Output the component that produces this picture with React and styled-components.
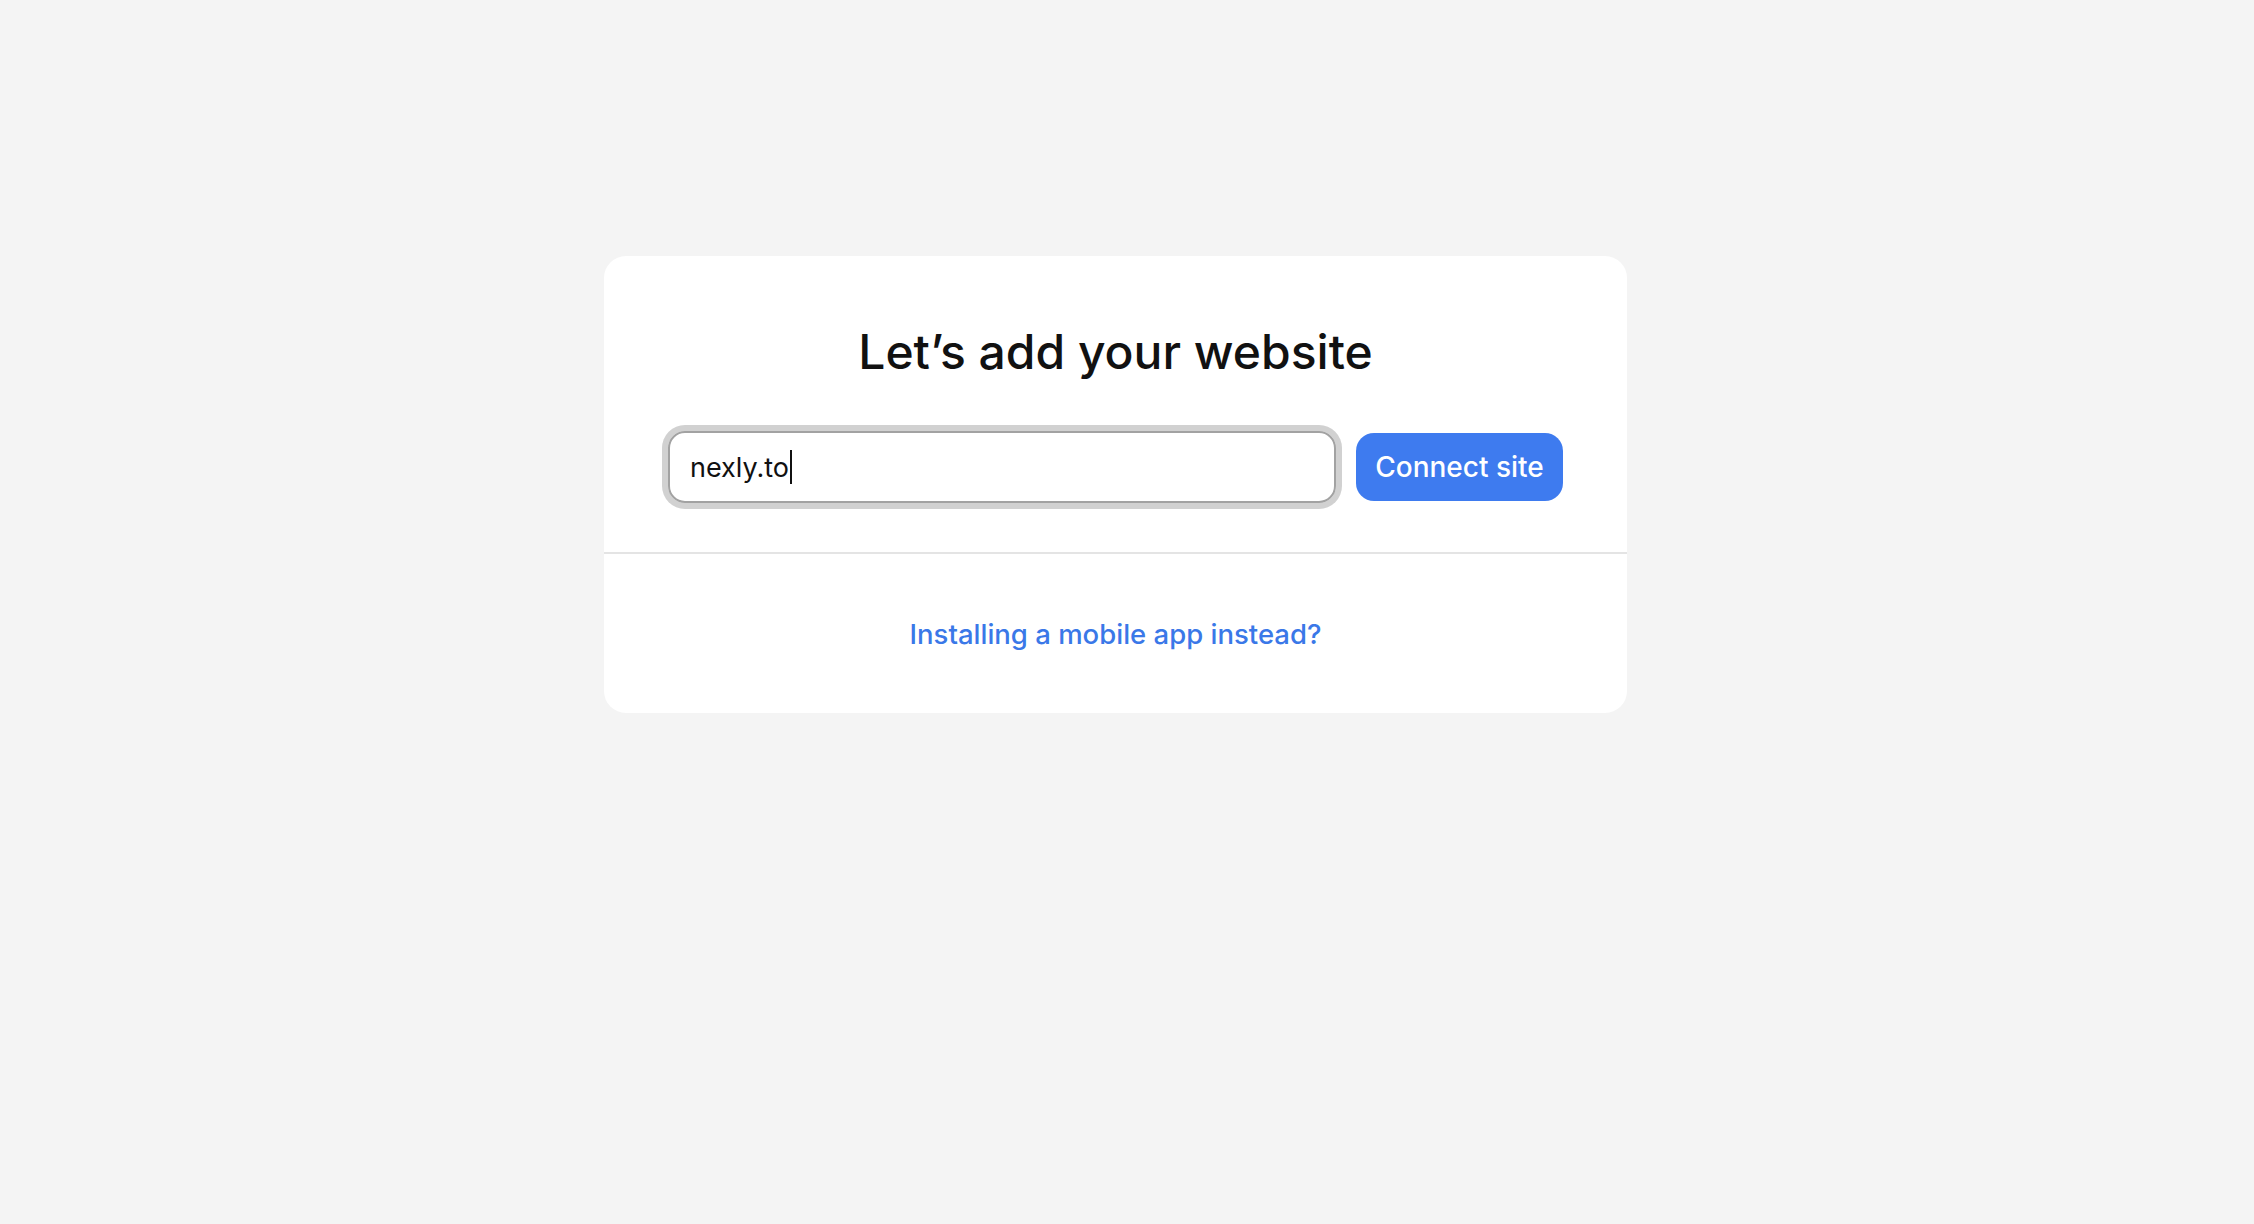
import React from 'react';
import styled, { createGlobalStyle } from 'styled-components';

const GlobalStyle = createGlobalStyle`
  html, body {
    margin: 0;
    padding: 0;
    background: #f4f4f4;
    font-family: Inter, "Noto Sans", sans-serif;
  }
`;

const Page = styled.div`
  min-height: 1224px;
  display: flex;
  justify-content: center;
  align-items: flex-start;
  padding: 256px 23px 0 0;
  box-sizing: border-box;
`;

const Card = styled.div`
  width: 1023px;
  background: #ffffff;
  border-radius: 22px;
  overflow: hidden;
`;

const Top = styled.div`
  padding: 67px 64px 49px 64px;
  border-bottom: 2px solid #e4e4e4;
`;

const Title = styled.h1`
  margin: 0 0 51px 0;
  text-align: center;
  font-size: 48px;
  font-weight: 500;
  line-height: 57px;
  color: #111111;
`;

const Row = styled.div`
  display: flex;
  align-items: center;
  gap: 20px;
`;

const Field = styled.div`
  flex: 1;
  height: 72px;
  box-sizing: border-box;
  display: flex;
  align-items: center;
  padding: 0 20px;
  border: 2px solid #a2a2a2;
  border-radius: 17px;
  box-shadow: 0 0 0 6px #d1d1d1;
  font-size: 27px;
  color: #111111;
`;

const Caret = styled.span`
  display: inline-block;
  width: 2px;
  height: 34px;
  margin-left: 1px;
  background: #111111;
`;

const Button = styled.button`
  height: 68px;
  width: 207px;
  border: none;
  border-radius: 18px;
  background: #3e7bef;
  color: #ffffff;
  font-family: inherit;
  font-size: 28px;
  font-weight: 500;
  cursor: pointer;
`;

const Bottom = styled.div`
  display: flex;
  justify-content: center;
  align-items: center;
  height: 159px;
`;

const Link = styled.a`
  color: #3a78e8;
  font-size: 27.5px;
  font-weight: 500;
  text-decoration: none;
  cursor: pointer;
`;

export default function App() {
  return (
    <>
      <GlobalStyle />
      <Page>
        <Card>
          <Top>
            <Title>Let’s add your website</Title>
            <Row>
              <Field>
                nexly.to
                <Caret />
              </Field>
              <Button>Connect site</Button>
            </Row>
          </Top>
          <Bottom>
            <Link>Installing a mobile app instead?</Link>
          </Bottom>
        </Card>
      </Page>
    </>
  );
}
